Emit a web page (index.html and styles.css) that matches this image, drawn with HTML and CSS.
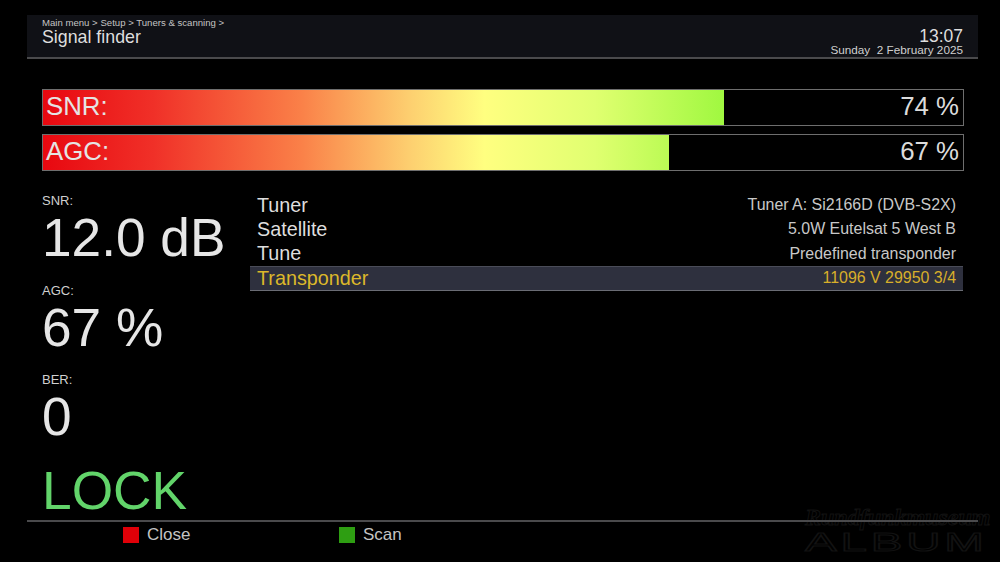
FILE: index.html
```html
<!DOCTYPE html>
<html lang="en">
<head>
<meta charset="utf-8">
<title>Signal finder</title>
<link rel="stylesheet" href="styles.css">
</head>
<body>
<div class="screen">
  <header class="head">
    <div class="head-left">
      <div class="crumb">Main menu &gt; Setup &gt; Tuners &amp; scanning &gt;</div>
      <div class="title">Signal finder</div>
    </div>
    <div class="head-right">
      <div class="time">13:07</div>
      <div class="date">Sunday&nbsp; 2 February 2025</div>
    </div>
  </header>
  <section class="bars">
    <div class="bar">
      <div class="bar-fill" style="width:74%"></div>
      <span class="bar-label">SNR:</span><span class="bar-val">74 %</span>
    </div>
    <div class="bar">
      <div class="bar-fill" style="width:68%"></div>
      <span class="bar-label">AGC:</span><span class="bar-val">67 %</span>
    </div>
  </section>
  <main class="body">
    <div class="stats">
      <div class="stat"><div class="stat-label">SNR:</div><div class="stat-val">12.0 dB</div></div>
      <div class="stat"><div class="stat-label">AGC:</div><div class="stat-val">67 %</div></div>
      <div class="stat"><div class="stat-label">BER:</div><div class="stat-val">0</div></div>
      <div class="lock">LOCK</div>
    </div>
    <div class="list">
      <div class="row"><span class="row-name">Tuner</span><span class="row-val">Tuner A: Si2166D (DVB-S2X)</span></div>
      <div class="row"><span class="row-name">Satellite</span><span class="row-val">5.0W Eutelsat 5 West B</span></div>
      <div class="row"><span class="row-name">Tune</span><span class="row-val">Predefined transponder</span></div>
      <div class="row row-active"><span class="row-name">Transponder</span><span class="row-val">11096 V 29950 3/4</span></div>
    </div>
  </main>
  <div class="mark"><div class="mark-top">Rundfunkmuseum</div><div class="mark-bot">ALBUM</div></div>
  <footer class="foot">
    <div class="key key-close"><i class="swatch swatch-red"></i>Close</div>
    <div class="key"><i class="swatch swatch-green"></i>Scan</div>
  </footer>
</div>
</body>
</html>
```
FILE: styles.css
```css
* { box-sizing: border-box; }
html, body { margin: 0; background: #000; }
.screen {
  position: relative;
  width: 1000px;
  height: 562px;
  overflow: hidden;
  background: #000;
  color: #e2e2e2;
  font-family: "Liberation Sans", Arial, sans-serif;
  padding-top: 15px;
}
.head {
  margin: 0 22px 0 27px;
  height: 44px;
  background: #101116;
  border-bottom: 2px solid #4a4a4c;
  padding: 0 14px 0 15px;
  display: flex;
  justify-content: space-between;
}
.crumb { font-size: 9.6px; line-height: 12px; margin-top: 2px; color: #c4c4c4; white-space: nowrap; }
.title { font-size: 17.8px; line-height: 20px; margin-top: -2px; color: #dedede; }
.head-right { text-align: right; padding-top: 13px; padding-right: 1px; }
.time { font-size: 17.5px; line-height: 17px; color: #dedede; }
.date { font-size: 11.75px; line-height: 9px; color: #cfcfcf; white-space: nowrap; }
.bars {
  margin: 29.7px 36px 0 42px;
  display: flex;
  flex-direction: column;
  gap: 7.3px;
}
.bar {
  position: relative;
  height: 37.7px;
  border: 1px solid #6e6e6e;
  display: flex;
  align-items: center;
  justify-content: space-between;
  padding: 0 4px 2px 3px;
  font-size: 25.8px;
  color: #dcdcdc;
}
.bar-fill {
  position: absolute;
  left: 0; top: 0; bottom: 0;
  background: linear-gradient(90deg, #e80810 0, #f03028 12%, #fa8048 28%, #fdd070 40%, #ffff80 48%, #e0ff70 60%, #a0f840 74%, #60f020 100%);
  background-size: 920px 100%;
  background-repeat: no-repeat;
}
.bar-label, .bar-val { position: relative; }
.bar-label { color: #e4e4e4; }
.body {
  display: flex;
  margin: 13.7px 37px 0 42px;
}
.stats { width: 208px; flex: none; }
.stat { height: 89.5px; padding-top: 8px; }
.stat-label { font-size: 13px; line-height: 15px; color: #d0d0d0; }
.stat-val { font-size: 53.2px; line-height: 56px; margin-top: 2px; color: #e6e6e6; white-space: nowrap; }
.lock { font-size: 53.3px; line-height: 56px; color: #62d46a; margin-top: 9px; }
.list { flex: 1; padding-top: 8px; }
.row {
  height: 24.3px;
  display: flex;
  justify-content: space-between;
  align-items: center;
  padding: 0 7px 0 7px;
}
.row-name { font-size: 19.8px; color: #dedede; }
.row-val { font-size: 15.95px; color: #c8c8c8; }
.row-active {
  height: 24.6px;
  background: #2e303e;
  border-top: 1px solid #4a4c58;
  border-bottom: 1px solid #6a6c74;
}
.row-active .row-name { color: #dcb82a; }
.row-active .row-val { color: #d8ae2a; }
.foot {
  position: absolute;
  left: 27px; right: 22px; bottom: 0;
  height: 42px;
  border-top: 2px solid #4a4a4c;
  display: flex;
  padding: 4px 0 0 96px;
  font-size: 17px;
  color: #c4c4c4;
}
.key { display: flex; align-items: center; gap: 8px; height: 17px; }
.key-close { width: 216px; }
.swatch { width: 16px; height: 16px; display: block; }
.swatch-red { background: #e00008; }
.swatch-green { background: #2e9e12; }
.mark {
  position: absolute;
  left: 805px; top: 503px;
  width: 190px;
  color: transparent;
  -webkit-text-stroke: 1px #121212;
  white-space: nowrap;
}
.mark-top { font: italic 700 24px/28px "Liberation Serif", serif; }
.mark-bot { font-size: 25px; line-height: 22px; letter-spacing: 2px; transform: scaleX(1.9); transform-origin: left center; }
```
